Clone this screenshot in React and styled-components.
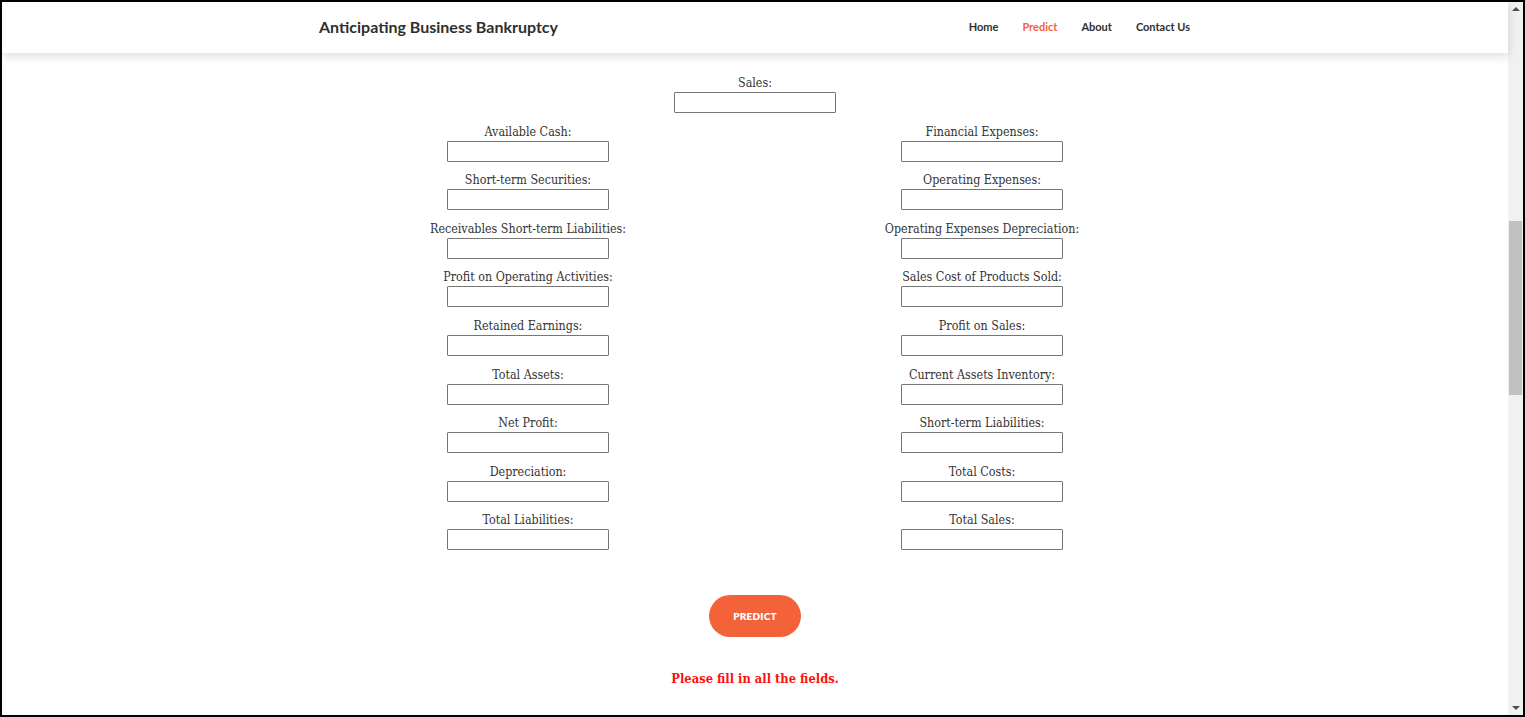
import { createGlobalStyle } from 'styled-components';
import styled from 'styled-components';

const ORANGE = "#f4623a";

const leftFields = [
  "Available Cash:",
  "Short-term Securities:",
  "Receivables Short-term Liabilities:",
  "Profit on Operating Activities:",
  "Retained Earnings:",
  "Total Assets:",
  "Net Profit:",
  "Depreciation:",
  "Total Liabilities:",
];

const rightFields = [
  "Financial Expenses:",
  "Operating Expenses:",
  "Operating Expenses Depreciation:",
  "Sales Cost of Products Sold:",
  "Profit on Sales:",
  "Current Assets Inventory:",
  "Short-term Liabilities:",
  "Total Costs:",
  "Total Sales:",
];

const navItems = ["Home", "Predict", "About", "Contact Us"];

const GlobalStyle = createGlobalStyle`
  html, body {
    margin: 0;
    padding: 0;
    background: #fff;
    overflow: hidden;
  }
  * { box-sizing: border-box; }
`;

const Frame = styled.div`
  width: 1525px;
  height: 717px;
  border: 2px solid #000;
  display: flex;
  overflow: hidden;
`;

const Page = styled.div`
  flex: 1;
  display: flex;
  flex-direction: column;
  background: #fff;
`;

const Header = styled.header`
  height: 51px;
  flex-shrink: 0;
  display: flex;
  align-items: center;
  justify-content: space-between;
  padding: 0 318px 0 317px;
  background: #fff;
  box-shadow: 0 3px 10px rgba(0, 0, 0, 0.14);
  position: relative;
  z-index: 1;
`;

const Brand = styled.div`
  font-family: "Lato", sans-serif;
  font-weight: 700;
  font-size: 16px;
  color: #2f2f2f;
  padding-bottom: 2px;
`;

const Nav = styled.nav`
  display: flex;
  gap: 24px;
  padding-bottom: 2px;
`;

const NavLink = styled.a`
  font-family: "Lato", sans-serif;
  font-weight: 700;
  font-size: 11px;
  color: ${props => props.active ? ORANGE : "#2f2f2f"};
  text-decoration: none;
`;

const Form = styled.form`
  display: flex;
  flex-direction: column;
  align-items: center;
  padding-top: 21px;
`;

const Field = styled.label`
  display: flex;
  flex-direction: column;
  align-items: center;
  gap: 1px;
  font-family: "DejaVu Serif Condensed", "DejaVu Serif", serif;
  font-stretch: condensed;
  font-size: 12.4px;
  line-height: 17px;
  color: #333;
  height: 48.6px;
`;

const Input = styled.input`
  width: 162px;
  height: 21px;
  border: 1px solid #767676;
  border-radius: 1px;
  background: #fff;
  margin: 0;
  padding: 0 4px;
`;

const Columns = styled.div`
  display: grid;
  grid-template-columns: 300px 300px;
  column-gap: 154px;
  justify-items: center;
`;

const Column = styled.div`
  display: flex;
  flex-direction: column;
  align-items: center;
`;

const PredictButton = styled.button`
  margin-top: 35px;
  width: 92px;
  height: 42px;
  border: none;
  border-radius: 21px;
  background: ${ORANGE};
  color: #fff;
  font-family: "Lato", sans-serif;
  font-weight: 800;
  font-size: 10px;
  letter-spacing: 0.2px;
`;

const ErrorText = styled.p`
  margin: 34px 0 0;
  font-family: "DejaVu Serif Condensed", "DejaVu Serif", serif;
  font-stretch: condensed;
  font-weight: 700;
  font-size: 12.8px;
  color: #ff1010;
`;

const Scrollbar = styled.div`
  width: 15px;
  flex-shrink: 0;
  background: #f1f1f1;
  display: flex;
  flex-direction: column;
  align-items: center;
  padding: 5px 1px;
`;

const Arrow = styled.div`
  width: 0;
  height: 0;
  border-left: 4px solid transparent;
  border-right: 4px solid transparent;
  ${props => props.down
    ? `border-top: 4px solid #505050;`
    : `border-bottom: 4px solid #505050;`}
`;

const Track = styled.div`
  flex: 1;
  width: 100%;
  padding: 210px 0 311px;
  display: flex;
`;

const Thumb = styled.div`
  flex: 1;
  background: #c1c1c1;
`;

function FormField({ label }) {
  return (
    <Field>
      {label}
      <Input type="text" />
    </Field>
  );
}

export default function App() {
  return (
    <>
      <GlobalStyle />
      <Frame>
        <Page>
          <Header>
            <Brand>Anticipating Business Bankruptcy</Brand>
            <Nav>
              {navItems.map(item => (
                <NavLink key={item} active={item === "Predict" ? 1 : 0}>{item}</NavLink>
              ))}
            </Nav>
          </Header>
          <Form onSubmit={e => e.preventDefault()}>
            <FormField label="Sales:" />
            <Columns>
              <Column>
                {leftFields.map(f => <FormField key={f} label={f} />)}
              </Column>
              <Column>
                {rightFields.map(f => <FormField key={f} label={f} />)}
              </Column>
            </Columns>
            <PredictButton type="submit">PREDICT</PredictButton>
            <ErrorText>Please fill in all the fields.</ErrorText>
          </Form>
        </Page>
        <Scrollbar>
          <Arrow />
          <Track><Thumb /></Track>
          <Arrow down />
        </Scrollbar>
      </Frame>
    </>
  );
}
